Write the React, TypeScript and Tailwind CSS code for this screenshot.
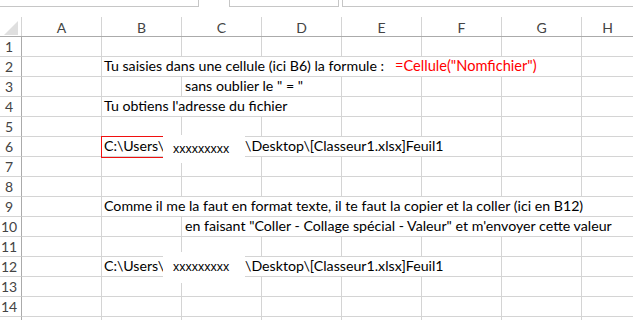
import React from 'react';

type Cell = { span?: number; content?: React.ReactNode; pad?: string };

const COLS = ['A', 'B', 'C', 'D', 'E', 'F', 'G', 'H'];

const SPAN_W: Record<number, string> = {
  1: 'w-[80px]',
  2: 'w-[160px]',
  3: 'w-[240px]',
  4: 'w-[320px]',
  5: 'w-[400px]',
  6: 'w-[480px]',
  7: 'w-[560px]',
};

const empty = (n: number): Cell[] => Array.from({ length: n }, () => ({}));

const Row: React.FC<{ n?: number; cells?: Cell[] }> = ({ n, cells }) => {
  const list = cells ?? empty(8);
  let used = 0;
  return (
    <div className="flex h-5">
      <div className="w-[22px] shrink-0 border-r border-b border-r-[#ababab] border-b-[#d4d4d4] pr-[3px] text-center text-[14px] leading-[19px] text-[#444]">
        {n}
      </div>
      {list.map((c, i) => {
        const span = c.span ?? 1;
        used += span;
        const isLast = used >= 8;
        return (
          <div
            key={i}
            className={`${isLast ? 'flex-1' : SPAN_W[span]} shrink-0 flex items-end overflow-visible whitespace-nowrap border-b border-[#d4d4d4] ${isLast ? '' : 'border-r'} ${c.pad ?? 'pl-[2px]'} pb-[1px] text-[14.2px] leading-[18px] text-black`}
          >
            {c.content}
          </div>
        );
      })}
    </div>
  );
};

const Path = () => (
  <>
    <span className="inline-block w-[141px]">C:\Users\(</span>
    <span>\Desktop\[Classeur1.xlsx]Feuil1</span>
  </>
);

export default function App() {
  return (
    <div className="relative w-[633px] h-[320px] overflow-hidden bg-white" style={{ fontFamily: 'Lato, "Open Sans", sans-serif' }}>
      {/* formula bar remnants */}
      <div className="flex h-[17px]">
        <div className="w-[199px] h-[7px] border-r border-b border-[#c6c6c6]" />
        <div className="w-[30px]" />
        <div className="w-[110px] h-[7px] border-x border-b border-[#c6c6c6]" />
        <div className="w-[3px]" />
        <div className="flex-1 h-[7px] border-l border-b border-[#c6c6c6]" />
      </div>

      {/* column headers */}
      <div className="flex h-5 border-b border-[#ababab]">
        <div className="relative w-[22px] shrink-0 border-r border-[#d4d4d4]">
          <svg className="absolute left-[4px] top-[4px]" width="14" height="14" viewBox="0 0 14 14">
            <polygon points="14,0 14,14 0,14" fill="#dfdfdf" />
          </svg>
        </div>
        {COLS.map((c, i) => (
          <div
            key={c}
            className={`${i === 7 ? 'flex-1' : 'w-[80px] border-r border-[#d4d4d4]'} shrink-0 flex items-center justify-center pt-[1px] text-[14px] text-[#444]`}
          >
            {c}
          </div>
        ))}
      </div>

      <Row n={1} />
      <Row
        n={2}
        cells={[
          {},
          {
            span: 6,
            content: (
              <>
                <span className="inline-block w-[291px]">Tu saisies dans une cellule (ici B6) la formule :</span>
                <span className="text-[#ff0000] text-[14.6px]">=Cellule("Nomfichier")</span>
              </>
            ),
          },
          {},
        ]}
      />
      <Row n={3} cells={[{}, {}, { span: 2, content: 'sans oublier le " = "', pad: 'pl-[3px]' }, {}, {}, {}, {}]} />
      <Row n={4} cells={[{}, { span: 3, content: "Tu obtiens l'adresse du fichier" }, {}, {}, {}, {}]} />
      <Row n={5} />
      <Row n={6} cells={[{}, { span: 5, content: <Path /> }, {}, {}]} />
      <Row n={7} />
      <Row n={8} />
      <Row
        n={9}
        cells={[{}, { span: 7, content: 'Comme il me la faut en format texte, il te faut la copier et la coller (ici en B12)' }]}
      />
      <Row
        n={10}
        cells={[
          {},
          {},
          { span: 6, pad: 'pl-[3px]', content: 'en faisant "Coller - Collage spécial - Valeur" et m\'envoyer cette valeur' },
        ]}
      />
      <Row n={11} />
      <Row n={12} cells={[{}, { span: 5, content: <Path /> }, {}, {}]} />
      <Row n={13} />
      <Row n={14} />
      <Row />

      {/* selected cell B6 */}
      <div className="absolute left-[101px] top-[136px] w-[70px] h-[22px] border border-[#f01010]" />

      {/* pasted patches hiding the user name */}
      <div className="absolute left-[163px] top-[135px] w-[82px] h-[28px] bg-white pl-[10px] pt-[5px] text-[12.5px] text-black" style={{ fontFamily: '"Liberation Sans", Arial, sans-serif' }}>
        xxxxxxxxx
      </div>
      <div className="absolute left-[163px] top-[252px] w-[82px] h-[31px] bg-white pl-[10px] pt-[6px] text-[12.5px] text-black" style={{ fontFamily: '"Liberation Sans", Arial, sans-serif' }}>
        xxxxxxxxx
      </div>
    </div>
  );
}
